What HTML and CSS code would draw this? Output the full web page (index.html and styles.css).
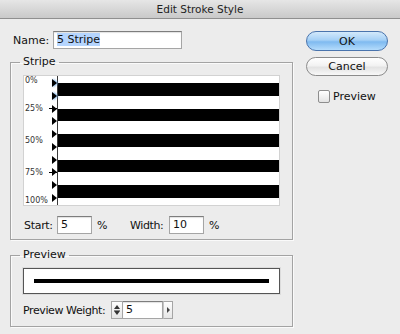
FILE: index.html
```html
<!DOCTYPE html>
<html lang="en">
<head>
  <meta charset="UTF-8">
  <title>Edit Stroke Style</title>
  <link rel="stylesheet" href="styles.css">
</head>
<body>
  <div class="window">
    <div class="titlebar">Edit Stroke Style</div>

    <div class="content">
      <div class="main">
        <div class="name-row">
          <span class="label name-label">Name:</span>
          <div class="field name-field"><span class="selected">5 Stripe</span></div>
        </div>

        <fieldset class="group stripe-group">
          <legend>Stripe</legend>
          <div class="stripe-canvas">
            <div class="scale">
              <span class="mark first">0%</span>
              <span class="mark tick">25%</span>
              <span class="mark">50%</span>
              <span class="mark tick">75%</span>
              <span class="mark last">100%</span>
            </div>
            <div class="track">
              <div class="gap half"></div>
              <div class="stripe selected-stripe"></div>
              <div class="gap"></div>
              <div class="stripe"></div>
              <div class="gap"></div>
              <div class="stripe"></div>
              <div class="gap"></div>
              <div class="stripe"></div>
              <div class="gap"></div>
              <div class="stripe"></div>
              <div class="gap half"></div>
            </div>
          </div>
          <div class="field-row">
            <span class="label start-label">Start:</span>
            <div class="field small-field">5</div>
            <span class="unit unit-start">%</span>
            <span class="label width-label">Width:</span>
            <div class="field small-field">10</div>
            <span class="unit">%</span>
          </div>
        </fieldset>

        <fieldset class="group preview-group">
          <legend>Preview</legend>
          <div class="preview-box">
            <div class="preview-line"></div>
          </div>
          <div class="weight-row">
            <span class="label weight-label">Preview Weight:</span>
            <div class="spinner">
              <span class="spin-up"></span>
              <span class="spin-down"></span>
            </div>
            <div class="field weight-field">5</div>
            <div class="step-btn"><span></span></div>
          </div>
        </fieldset>
      </div>

      <div class="side">
        <button class="btn btn-ok">OK</button>
        <button class="btn btn-cancel">Cancel</button>
        <label class="check-row">
          <span class="checkbox"></span>
          Preview
        </label>
      </div>
    </div>
  </div>
</body>
</html>
```

FILE: styles.css
```css
body {
  margin: 0;
  padding: 0;
  font-family: "DejaVu Sans", Verdana, sans-serif;
  font-size: 11px;
  color: #111;
}
.window {
  width: 400px;
  height: 334px;
  background-color: #ececec;
  overflow: hidden;
}
.titlebar {
  height: 18px;
  line-height: 18px;
  text-align: center;
  color: #222;
  font-size: 10.5px;
  background: linear-gradient(#e6e6e6, #c9c9c9);
  border-bottom: 1px solid #8f8f8f;
}
.content {
  display: flex;
}
.main {
  width: 283px;
  margin-left: 10px;
}
.label {
  white-space: nowrap;
}

/* fields */
.field {
  box-sizing: border-box;
  height: 18px;
  line-height: 16px;
  padding: 0 3px;
  background-color: #fff;
  border: 1px solid #a5a5a5;
  border-top-color: #7d7d7d;
  box-shadow: inset 0 1px 1px rgba(0, 0, 0, 0.12);
}
.name-row {
  display: flex;
  align-items: center;
  height: 18px;
  margin-top: 12px;
  padding-left: 3px;
}
.name-label {
  width: 40px;
}
.name-field {
  width: 129px;
}
.name-field .selected {
  background-color: #b5d5fe;
}

/* group boxes */
.group {
  margin: 0;
  border: 1px solid #a3a3a3;
  box-shadow: 1px 1px 0 #fafafa, inset 1px 1px 0 #fafafa;
  padding: 0 12px 5px 12px;
}
.group legend {
  margin-left: -3px;
  padding: 0 3px;
  line-height: 14px;
}
.stripe-group {
  margin-top: 6px;
}
.preview-group {
  margin-top: 8px;
  padding-bottom: 7px;
}

/* stripe editor */
.stripe-canvas {
  display: flex;
  height: 129px;
  margin-top: 6px;
  background-color: #fff;
  border: 1px solid #d2d2d2;
}
.scale {
  width: 33px;
  display: flex;
  flex-direction: column;
  padding: 1px 0;
  font-size: 8px;
  color: #333;
}
.mark {
  display: flex;
  align-items: center;
  flex: 1 1 0;
  padding-left: 1px;
}
.mark.first {
  flex-grow: 0.5;
  align-items: flex-start;
  margin-top: -1px;
}
.mark.last {
  flex-grow: 0.5;
  align-items: flex-end;
  margin-bottom: -1px;
}
.mark.tick::after {
  content: "";
  margin-left: auto;
  width: 8px;
  height: 1px;
  background-color: #000;
}
.track {
  flex: 1;
  display: flex;
  flex-direction: column;
  padding: 1px 0;
  border-left: 1px solid #3a3a3a;
}
.gap {
  flex: 2 1 0;
}
.gap.half {
  flex-grow: 1;
}
.stripe {
  position: relative;
  flex: 2 1 0;
  background-color: #000;
}
.stripe::before,
.stripe::after {
  content: "";
  position: absolute;
  left: -6px;
  width: 0;
  height: 0;
  border-left: 5px solid #000;
  border-top: 4px solid transparent;
  border-bottom: 4px solid transparent;
}
.stripe::before {
  top: -4px;
}
.stripe::after {
  bottom: -4px;
}
.selected-stripe::before,
.selected-stripe::after {
  filter: drop-shadow(1px 0 1px #5fa2e6);
}

.field-row {
  display: flex;
  align-items: center;
  height: 18px;
  margin-top: 10px;
  padding-left: 1px;
}
.start-label {
  width: 33px;
  letter-spacing: -0.3px;
}
.small-field {
  width: 35px;
}
.unit {
  margin-left: 5px;
}
.unit-start {
  width: 33px;
}
.width-label {
  width: 39px;
  letter-spacing: -0.4px;
}

/* preview */
.preview-box {
  display: flex;
  align-items: center;
  height: 24px;
  margin-top: 6px;
  padding: 0 10px;
  background-color: #fff;
  border: 1px solid #555;
  box-shadow: 0 0 0 1px #dcdcdc;
}
.preview-line {
  flex: 1;
  height: 4px;
  background-color: #000;
}
.weight-row {
  display: flex;
  align-items: center;
  height: 18px;
  margin-top: 7px;
}
.weight-label {
  width: 88px;
  letter-spacing: -0.4px;
}
.spinner {
  box-sizing: border-box;
  width: 12px;
  height: 18px;
  display: flex;
  flex-direction: column;
  align-items: center;
  justify-content: center;
  gap: 2px;
  border: 1px solid #a5a5a5;
  background: linear-gradient(#fdfdfd, #e4e4e4);
}
.spin-up,
.spin-down {
  width: 0;
  height: 0;
  border-left: 3px solid transparent;
  border-right: 3px solid transparent;
}
.spin-up {
  border-bottom: 4px solid #333;
}
.spin-down {
  border-top: 4px solid #333;
  box-shadow: 0 -1px 0 #888;
}
.weight-field {
  width: 40px;
  border-left: none;
}
.step-btn {
  box-sizing: border-box;
  width: 10px;
  height: 18px;
  display: flex;
  align-items: center;
  justify-content: center;
  border: 1px solid #a5a5a5;
  border-left-color: #c5c5c5;
  background: linear-gradient(#fdfdfd, #e6e6e6);
}
.step-btn span {
  width: 0;
  height: 0;
  border-left: 3px solid #444;
  border-top: 3px solid transparent;
  border-bottom: 3px solid transparent;
}

/* right column */
.side {
  width: 82px;
  margin-left: 13px;
  display: flex;
  flex-direction: column;
}
.btn {
  box-sizing: border-box;
  width: 82px;
  padding: 0;
  font-family: "DejaVu Sans", Verdana, sans-serif;
  font-size: 11px;
  color: #111;
  border-radius: 10px;
  cursor: pointer;
}
.btn-ok {
  height: 20px;
  margin-top: 12px;
  border: 1px solid #4a74ad;
  background: linear-gradient(#d3e9fb 0%, #a5d0f6 45%, #7fbaf0 55%, #b4dcfc 100%);
}
.btn-cancel {
  height: 19px;
  margin-top: 6px;
  border: 1px solid #8b8b8b;
  background: linear-gradient(#ffffff 0%, #f2f2f2 45%, #e3e3e3 55%, #f8f8f8 100%);
}
.check-row {
  display: flex;
  align-items: center;
  margin-top: 14px;
  margin-left: 12px;
}
.checkbox {
  box-sizing: border-box;
  width: 12px;
  height: 13px;
  margin-right: 3px;
  border: 1px solid #8d8d8d;
  border-radius: 2px;
  background: linear-gradient(#ffffff, #e3e3e3);
}
```
